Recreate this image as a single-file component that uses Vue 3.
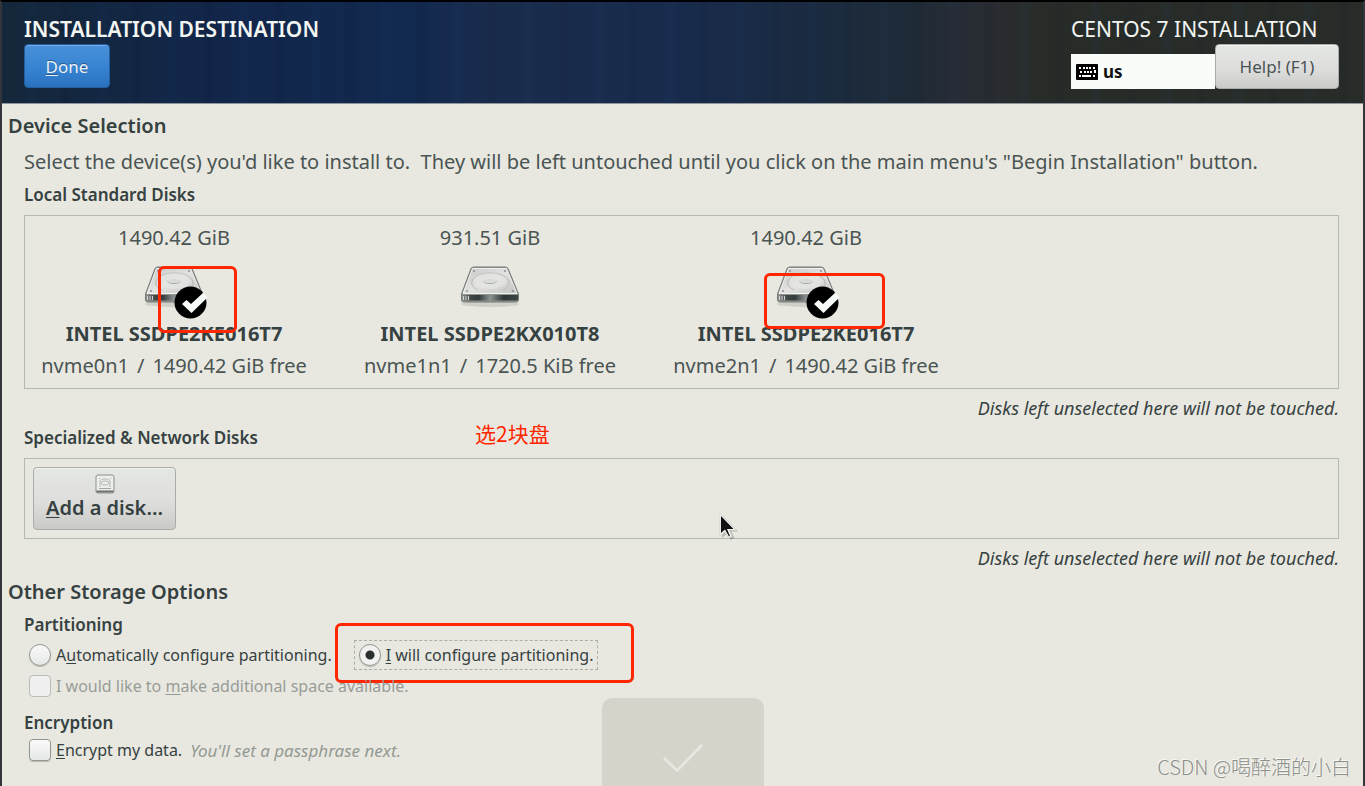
<script setup>
import { ref } from 'vue'

const disks = [
  { name: 'INTEL SSDPE2KE016T7', size: '1490.42 GiB', dev: 'nvme0n1', free: '1490.42 GiB free', selected: true, mark: 'mark-first' },
  { name: 'INTEL SSDPE2KX010T8', size: '931.51 GiB', dev: 'nvme1n1', free: '1720.5 KiB free', selected: false },
  { name: 'INTEL SSDPE2KE016T7', size: '1490.42 GiB', dev: 'nvme2n1', free: '1490.42 GiB free', selected: true, mark: 'mark-last' }
]

const partitioning = ref('manual')
const encrypt = ref(false)
</script>

<template>
  <div class="screen">
    <header class="topbar">
      <div class="topbar-left">
        <h1 class="spoke-title">INSTALLATION DESTINATION</h1>
        <button type="button" class="btn btn-done"><span><u>D</u>one</span></button>
      </div>
      <div class="topbar-right">
        <p class="product">CENTOS 7 INSTALLATION</p>
        <div class="topbar-tools">
          <div class="keyboard">
            <svg width="22" height="16" viewBox="0 0 22 16">
              <rect width="22" height="16" rx="1" fill="#000" />
              <g fill="#fff">
                <path d="M3 3h2v2H3zM7 3h2v2H7zM10 3h2v2h-2zM13 3h2v2h-2zM17 3h2v2h-2z" />
                <path d="M4 7h2v2H4zM8 7h2v2H8zM11 7h2v2h-2zM14 7h2v2h-2zM18 6h2v3h-2z" />
                <path d="M3 11h2v2H3zM6 11h9v2H6zM17 11h2v2h-2z" />
              </g>
            </svg>
            <span>us</span>
          </div>
          <button type="button" class="btn btn-help">Help! (F1)</button>
        </div>
      </div>
    </header>

    <main class="content">
      <h2>Device Selection</h2>
      <div class="section">
        <p class="intro">Select the device(s) you'd like to install to.&nbsp; They will be left untouched until you click on the main menu's "Begin Installation" button.</p>
        <h3>Local Standard Disks</h3>
        <div class="frame disks">
          <div v-for="disk in disks" :key="disk.dev" class="disk">
            <p>{{ disk.size }}</p>
            <svg class="disk-icon" width="64" height="64" viewBox="0 0 64 64">
              <defs>
                <linearGradient :id="'top-' + disk.dev" x1="0" y1="0" x2="1" y2="1">
                  <stop offset="0" stop-color="#c8c9c7" />
                  <stop offset="0.5" stop-color="#e2e3e1" />
                  <stop offset="1" stop-color="#c3c4c2" />
                </linearGradient>
                <linearGradient :id="'side-' + disk.dev" x1="0" y1="0" x2="1" y2="0">
                  <stop offset="0" stop-color="#8f9491" />
                  <stop offset="0.16" stop-color="#3f4644" />
                  <stop offset="0.3" stop-color="#343b3a" />
                  <stop offset="0.5" stop-color="#8c9290" />
                  <stop offset="0.75" stop-color="#2d3736" />
                  <stop offset="1" stop-color="#3d4947" />
                </linearGradient>
              </defs>
              <ellipse cx="32" cy="50" rx="29" ry="3" fill="#000" opacity="0.1" />
              <path d="M13 14.500Q14 13 16 13H47Q49 13 50 14.500L60.500 40V46Q60.500 48 58 48H6Q3.500 48 3.500 46V40Z" fill="#8e9390" stroke="#777c79" />
              <path d="M14.500 14.500H48.500L59 39.500H5Z" :fill="'url(#top-' + disk.dev + ')'" stroke="#f1f1f0" />
              <path d="M4 41H60V45.500Q60 46.500 58.500 46.500H5.500Q4 46.500 4 45.500Z" :fill="'url(#side-' + disk.dev + ')'" />
              <path d="M5.500 42V46M8 42V46M10.500 42V46" stroke="#cdd0ce" />
              <path d="M20 36C8 31 14 19 32 19S57 30 45 36" fill="none" stroke="#b7b9b7" />
              <ellipse cx="32" cy="27" rx="16" ry="8" fill="#e6e7e6" opacity="0.6" />
              <path d="M25.500 27Q26 29.500 32 29.500T38.500 27" fill="none" stroke="#a4a7a5" />
              <ellipse cx="32" cy="27" rx="6.500" ry="2" fill="#d9dbd9" />
              <g fill="#8d918f">
                <circle cx="16" cy="17" r="1" />
                <circle cx="47" cy="17" r="1" />
                <circle cx="9" cy="37" r="1" />
                <circle cx="55" cy="37" r="1" />
              </g>
              <g v-if="disk.selected">
                <circle cx="48.500" cy="48.500" r="16" fill="#000" />
                <path d="M40 50L44.500 46L49 50L61.500 38.500L65.500 43.500L49.500 59Z" fill="#f7fbf7" />
              </g>
            </svg>
            <p class="disk-name">{{ disk.name }}</p>
            <p class="disk-free"><span>{{ disk.dev }}</span><span>/</span><span>{{ disk.free }}</span></p>
            <span v-if="disk.mark" class="mark" :class="disk.mark"></span>
          </div>
        </div>
        <p class="note">Disks left unselected here will not be touched.</p>

        <div class="special-head">
          <h3>Specialized &amp; Network Disks</h3>
          <span class="remark">选2块盘</span>
        </div>
        <div class="frame special">
          <button type="button" class="btn btn-add">
            <svg width="20" height="20" viewBox="0 0 20 20">
              <rect x="1" y="1" width="18" height="18" rx="2" fill="#eceeec" stroke="#8b908d" />
              <path d="M1.500 17.500H18.500" stroke="#6b706d" stroke-width="2" />
              <path d="M5 13V8Q5 5 10 5T15 8V13" fill="none" stroke="#b4b8b5" />
              <ellipse cx="10" cy="9" rx="4" ry="2" fill="none" stroke="#b4b8b5" />
              <path d="M4 14.500H16M4 4.500H5M15 4.500H16" stroke="#a3a7a4" />
            </svg>
            <span><u>A</u>dd a disk…</span>
          </button>
          <svg class="pointer" width="20" height="28" viewBox="0 0 20 28">
            <path d="M3 2V25L8 20.500L11.500 27L15.500 25L12.500 18.500H19Z" fill="#000" opacity="0.2" />
            <path d="M1 0.500V23L6 18.500L9.500 25L13 23.500L10 17H17Z" fill="#fff" stroke="#d8d9d4" />
            <path d="M2 3V20L6 16.500L10 23.500L11 23L8 16H14.500Z" fill="#111" />
          </svg>
        </div>
        <p class="note">Disks left unselected here will not be touched.</p>
      </div>

      <h2>Other Storage Options</h2>
      <div class="section">
        <h3>Partitioning</h3>
        <div class="options">
          <label class="option">
            <input v-model="partitioning" type="radio" name="partitioning" value="auto">
            <span>A<u>u</u>tomatically configure partitioning.</span>
          </label>
          <label class="option focused">
            <input v-model="partitioning" type="radio" name="partitioning" value="manual">
            <span><u>I</u> will configure partitioning.</span>
            <span class="mark mark-option"></span>
          </label>
        </div>
        <div class="options">
          <label class="option disabled">
            <input type="checkbox" disabled>
            <span>I would like to <u>m</u>ake additional space available.</span>
          </label>
        </div>
        <h3 class="encryption">Encryption</h3>
        <div class="options encrypt-row">
          <label class="option">
            <input v-model="encrypt" type="checkbox">
            <span><u>E</u>ncrypt my data.</span>
          </label>
          <em class="hint">You'll set a passphrase next.</em>
        </div>
      </div>
    </main>

    <div class="toast">
      <svg width="42" height="30" viewBox="0 0 42 30">
        <path d="M2 15L15 27.500L40 2" fill="none" stroke="#e7e7df" stroke-width="3" />
      </svg>
    </div>
    <div class="watermark">CSDN @喝醉酒的小白</div>
  </div>
</template>

<style>
body { margin: 0; background: #e8e8e0; }
</style>

<style scoped>
.screen { position: relative; box-sizing: border-box; min-height: 100vh; overflow: hidden; border: 2px solid #34353a; border-top-color: #000; border-bottom: 0; background: #e8e8e0; color: #364141; font-family: "Noto Sans", "Noto Sans CJK SC", sans-serif; font-size: 17px; }
h1, h2, h3, p { margin: 0; }
u { text-decoration: underline; text-underline-offset: 2px; text-decoration-thickness: 1px; }

.topbar {
  display: flex; justify-content: space-between; box-sizing: border-box; height: 102px; padding: 12px 24px 0 22px; border-bottom: 1px solid #8f959c;
  background:
    repeating-linear-gradient(90deg, transparent 0 22px, rgba(30, 80, 150, 0.05) 27px 31px, transparent 36px 58px, rgba(5, 15, 40, 0.08) 61px 66px, transparent 71px),
    linear-gradient(90deg, #14273a 0, #12264a 16%, #12294f 30%, #1a2c4c 36%, #182b4c 50%, #1a2b42 58%, #1e2b38 66%, #292c33 72%, #282c29 76%, #282c29 100%);
  color: #f2f5f2;
}
.spoke-title { font-size: 21px; font-weight: 600; line-height: 30px; }
.product { font-size: 21px; line-height: 30px; }
.topbar-tools { display: flex; align-items: flex-end; }
.keyboard { display: flex; align-items: center; gap: 5px; box-sizing: border-box; width: 144px; height: 35px; padding: 0 5px; background: #f8fdf9; color: #111; font-weight: 700; }

.btn { box-sizing: border-box; border: 1px solid #a9aca8; border-radius: 4px; background: linear-gradient(#e4e7e4, #dededd 55%, #cacbc7); box-shadow: inset 0 1px #f3f4f2; color: #4a5353; font: inherit; }
.btn-done { width: 86px; height: 44px; border-color: #215f9f; background: linear-gradient(#4a90d9, #3683d2 55%, #2a72c0); box-shadow: inset 0 1px #72acea; color: #e9f1f9; text-shadow: 0 -1px #2a5b8c; }
.btn-help { width: 124px; height: 45px; }
.btn-add { display: flex; flex-direction: column; align-items: center; width: 143px; height: 63px; padding: 6px 0 0; color: #364141; font-size: 20px; font-weight: 600; line-height: 28px; }

.content { padding: 4px 6px 0; }
h2 { font-size: 20px; font-weight: 600; line-height: 36px; }
h3 { font-size: 17px; font-weight: 600; line-height: 30px; }
.section { padding: 0 18px 0 16px; }
.intro { color: #4a5453; font-size: 20px; line-height: 36px; white-space: nowrap; }
.frame { margin-top: 5px; border: 1px solid #b5b9b4; }
.disks { display: flex; gap: 18px; padding: 6px 0; }
.disk { position: relative; display: flex; flex: 0 0 298px; flex-direction: column; align-items: center; color: #4a5453; font-size: 20px; line-height: 32px; }
.disk-icon { overflow: visible; }
.disk-name { color: #364141; font-weight: 700; }
.disk-free { display: flex; gap: 8px; white-space: nowrap; }
.note { margin-top: 4px; font-size: 18px; font-style: italic; line-height: 30px; text-align: right; }
.special-head { display: flex; align-items: center; position: relative; }
.remark { position: absolute; left: 451px; top: -5px; color: #ff2600; font-family: "Noto Sans CJK SC", sans-serif; font-size: 21px; line-height: 30px; }
.special { position: relative; padding: 8px; }
.pointer { position: absolute; left: 694px; top: 54px; }
.section + h2 { margin-top: 1px; }

.options { display: flex; align-items: center; gap: 22px; height: 30px; font-size: 16px; }
.options + .options { height: 32px; }
.options.encrypt-row { gap: 8px; height: 24px; }
.option { position: relative; display: flex; align-items: center; gap: 5px; box-sizing: border-box; height: 30px; padding-left: 5px; white-space: nowrap; }
.option input { appearance: none; flex: none; box-sizing: border-box; width: 22px; height: 22px; margin: 0; border: 1px solid #93978f; border-radius: 4px; background: linear-gradient(#fafafa, #e6e7e7); box-shadow: 0 1px 1px rgba(0, 0, 0, 0.2); }
.option input[type="radio"] { border-radius: 50%; }
.option input[type="radio"]:checked { background: radial-gradient(circle, #29302f 4px, #f0f1f0 5px); }
.focused { padding-right: 5px; outline: 1px dashed #a9aeab; outline-offset: -1px; }
.disabled { color: #989c98; }
.option input:disabled { border-color: #b9bcb8; background: #f0f0f0; box-shadow: none; }
.encryption { margin-top: 6px; }
.hint { color: #949993; font-size: 17px; }

.mark { position: absolute; box-sizing: border-box; border: 3px solid #ff2600; border-radius: 6px; pointer-events: none; }
.mark-first { left: 133px; top: 44px; width: 79px; height: 67px; }
.mark-last { left: 107px; top: 51px; width: 121px; height: 56px; }
.mark-option { left: -19px; top: -17px; width: 299px; height: 60px; }

.toast { position: absolute; left: 50%; bottom: 0; display: flex; justify-content: center; box-sizing: border-box; width: 162px; height: 88px; padding-top: 45px; border-radius: 10px 10px 0 0; background: #d4d4cb; transform: translateX(-50%); }
.watermark { position: absolute; right: 12px; bottom: 4px; color: #8d8f8b; font-family: "Noto Sans CJK SC", sans-serif; font-size: 20px; font-weight: 300; line-height: 30px; text-shadow: -1px -1px #f8f8f4; }
</style>
